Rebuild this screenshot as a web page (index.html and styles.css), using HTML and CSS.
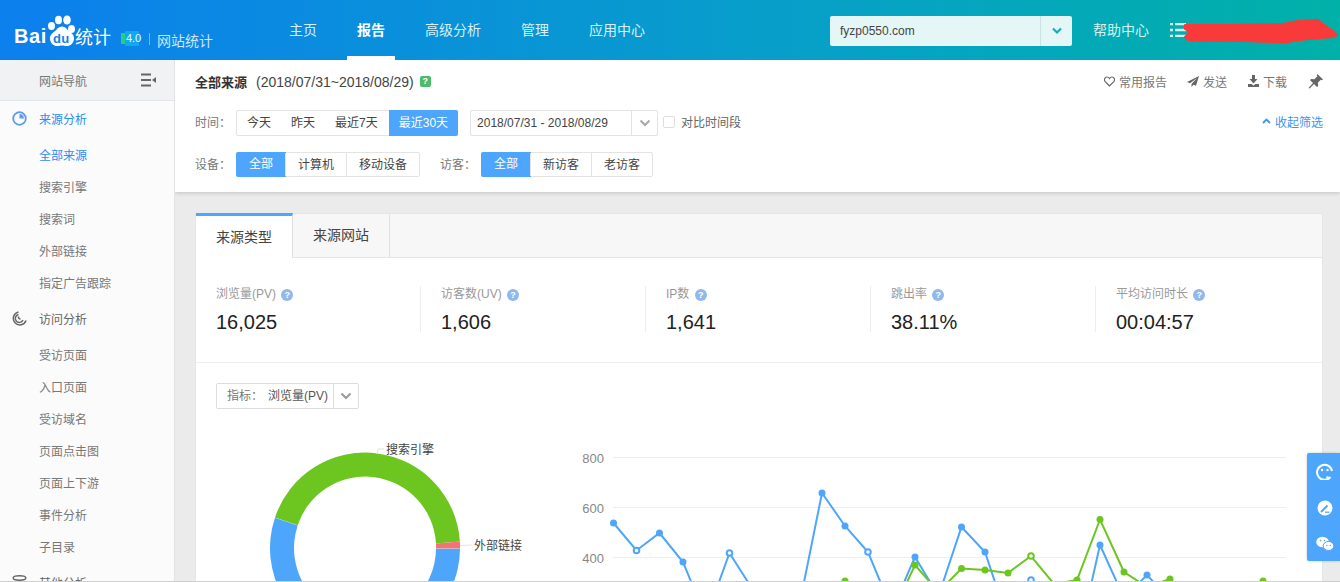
FILE: index.html
```html
<!DOCTYPE html>
<html lang="zh-CN">
<head>
    <meta charset="UTF-8">
    <meta name="viewport" content="width=device-width, initial-scale=1.0">
    <link rel="stylesheet" href="styles.css">
    <title>百度统计 - 全部来源</title>
</head>
<body>
<div class="page">

    <!-- Top header -->
    <header class="top-bar">
        <div class="logo">
            <span class="logo-bai">Bai</span>
            <span class="logo-paw">
                <svg width="29" height="32" viewBox="0 0 29 32">
                    <ellipse cx="4.500" cy="11" rx="3.500" ry="4" fill="#fff"/>
                    <ellipse cx="11.500" cy="5" rx="3.500" ry="4.200" fill="#fff"/>
                    <ellipse cx="20" cy="5" rx="3.800" ry="4.500" fill="#fff"/>
                    <ellipse cx="24.500" cy="14" rx="3.500" ry="4" fill="#fff"/>
                    <path d="M15 11.500c3.500 0 5 3 7.500 5 3 2.200 5 4.500 4.500 8-.6 3.800-3.800 6.500-7 6.500-2 0-3.500-.6-5-.6s-3 .6-5 .6c-3.200 0-6.400-2.700-7-6.500-.5-3.500 1.500-5.800 4.500-8 2.500-2 4-5 7.500-5z" fill="#fff"/>
                </svg>
                <span class="logo-du">du</span>
            </span>
            <span class="logo-cn">统计</span>
            <span class="logo-badge">
                <svg width="22" height="15" viewBox="0 0 22 15">
                    <path d="M0 2h8v11H0z" fill="#25cf80"/>
                    <path d="M4 0h14v5l3 2.500-3 2.500v5H4z" fill="#10a8ee"/>
                </svg>
                <span class="logo-ver">4.0</span>
            </span>
            <span class="logo-line"></span>
            <span class="logo-name">网站统计</span>
        </div>
        <nav class="top-nav">
            <a class="top-link">主页</a>
            <a class="top-link active">报告</a>
            <a class="top-link">高级分析</a>
            <a class="top-link">管理</a>
            <a class="top-link">应用中心</a>
        </nav>
        <div class="site-select">
            <span class="site-name">fyzp0550.com</span>
            <span class="site-arrow">
                <svg width="12" height="8" viewBox="0 0 12 8"><polyline points="2,1.500 6,5.500 10,1.500" fill="none" stroke="#11adc0" stroke-width="2.200"/></svg>
            </span>
        </div>
        <a class="help-link">帮助中心</a>
        <svg class="user-list" width="16" height="14" viewBox="0 0 16 14">
            <path d="M0 1h3M5 1h11M0 7h3M5 7h11M0 13h3M5 13h11" stroke="#d5f2ef" stroke-width="2.400"/>
        </svg>
    </header>

    <!-- Red scribble over the account name -->
    <svg class="scribble" width="156" height="28" viewBox="0 0 156 28">
        <path d="M2 7 50 7 100 6 115 3 135 2 140 6 150 13 154 17 150 19 125 21 110 23 100 25 90 24 60 23 20 23 5 22 2 19 7 14 2 11z" fill="#f83a3a" stroke="#f83a3a" stroke-width="2" stroke-linejoin="round"/>
    </svg>

    <div class="content">

        <!-- Left menu -->
        <aside class="side-menu">
            <div class="side-head">
                <span>网站导航</span>
                <svg width="16" height="14" viewBox="0 0 16 14">
                    <path d="M0 1.500h10M0 7h10M0 12.500h10" stroke="#666" stroke-width="2"/>
                    <path d="M15 4v6l-4-3z" fill="#666"/>
                </svg>
            </div>

            <div class="menu-title blue">
                <svg width="15" height="15" viewBox="0 0 15 15">
                    <circle cx="7.500" cy="7.500" r="6.300" fill="none" stroke="#5b9cf0" stroke-width="1.800"/>
                    <path d="M7.500 3v4.500h4.500a4.500 4.500 0 0 0-4.500-4.500z" fill="#5b9cf0"/>
                </svg>
                来源分析
            </div>
            <ul class="menu-list">
                <li class="blue">全部来源</li>
                <li>搜索引擎</li>
                <li>搜索词</li>
                <li>外部链接</li>
                <li>指定广告跟踪</li>
            </ul>

            <div class="menu-title">
                <svg width="15" height="15" viewBox="0 0 15 15" fill="none" stroke="#666" stroke-width="1.500">
                    <path d="M14 9.500a6.500 6.500 0 1 1-7.500-8.500"/>
                    <path d="M11 9a4 4 0 1 1-4.500-5.500"/>
                    <path d="M8.500 8a2 2 0 0 1-2-2.500"/>
                </svg>
                访问分析
            </div>
            <ul class="menu-list">
                <li>受访页面</li>
                <li>入口页面</li>
                <li>受访域名</li>
                <li>页面点击图</li>
                <li>页面上下游</li>
                <li>事件分析</li>
                <li>子目录</li>
            </ul>

            <div class="menu-title">
                <svg width="15" height="15" viewBox="0 0 15 15" fill="none" stroke="#666" stroke-width="1.500">
                    <ellipse cx="7.500" cy="3" rx="6.300" ry="2.200"/>
                </svg>
                其他分析
            </div>
        </aside>

        <main class="main-area">

            <!-- Filter panel -->
            <section class="filter-panel">
                <div class="title-row">
                    <b class="report-name">全部来源</b>
                    <span class="report-date">(2018/07/31~2018/08/29)</span>
                    <span class="green-tip">?</span>
                    <div class="report-tools">
                        <a class="tool first-tool">
                            <svg width="11" height="11" viewBox="0 0 11 11"><path d="M5.500 10 1.200 5.600C-.4 3.500 1 1 3 1c1.200 0 2 .6 2.500 1.500C6 1.600 6.800 1 8 1c2 0 3.400 2.500 1.800 4.600z" fill="none" stroke="#666" stroke-width="1.200"/></svg>
                            常用报告
                        </a>
                        <a class="tool">
                            <svg width="12" height="11" viewBox="0 0 12 11"><path d="M12 0 0 6l3 1.200L10 2 4.500 8v3l2-2.200 2.500 1z" fill="#666"/></svg>
                            发送
                        </a>
                        <a class="tool">
                            <svg width="11" height="12" viewBox="0 0 11 12"><path d="M4 0h3v4h2.500L5.500 8.500 1.500 4H4zM0 9h3.500l2 1.500 2-1.500H11v3H0z" fill="#666"/></svg>
                            下载
                        </a>
                        <svg class="pin" width="15" height="15" viewBox="0 0 15 15"><path d="M9.500 0 15 5.500l-1.200.8-1-.6-3 3 .4 3.200-1.200 1.200-3-3-4.500 4.500-1-.5 4.500-5-3-3L3.200 5l3.200.3 3-3-.6-1z" fill="#666"/></svg>
                    </div>
                </div>

                <div class="filter-row row-time">
                    <span class="filter-label">时间：</span>
                    <div class="btn-group plain">
                        <a class="seg">今天</a>
                        <a class="seg">昨天</a>
                        <a class="seg">最近7天</a>
                        <a class="seg on">最近30天</a>
                    </div>
                    <div class="date-box">
                        <span class="date-text">2018/07/31 - 2018/08/29</span>
                        <span class="date-arrow">
                            <svg width="12" height="8" viewBox="0 0 12 8"><polyline points="1.500,1.500 6,6 10.500,1.500" fill="none" stroke="#aaa" stroke-width="2"/></svg>
                        </span>
                    </div>
                    <span class="check-box"></span>
                    <span class="check-text">对比时间段</span>
                    <a class="fold-link">
                        <svg width="9" height="6" viewBox="0 0 9 6"><polyline points="1,5 4.500,1.500 8,5" fill="none" stroke="#3c96f0" stroke-width="1.800"/></svg>
                        收起筛选
                    </a>
                </div>

                <div class="filter-row row-device">
                    <span class="filter-label">设备：</span>
                    <div class="btn-group">
                        <a class="seg on">全部</a>
                        <a class="seg">计算机</a>
                        <a class="seg">移动设备</a>
                    </div>
                    <span class="filter-label visitor-label">访客：</span>
                    <div class="btn-group">
                        <a class="seg on">全部</a>
                        <a class="seg">新访客</a>
                        <a class="seg">老访客</a>
                    </div>
                </div>
            </section>

            <!-- Report card -->
            <section class="report-card">
                <div class="tabs">
                    <a class="tab active">来源类型</a>
                    <a class="tab">来源网站</a>
                </div>

                <div class="stats">
                    <div class="stat">
                        <div class="stat-label">浏览量(PV) <span class="help">?</span></div>
                        <div class="stat-value">16,025</div>
                    </div>
                    <div class="stat">
                        <div class="stat-label">访客数(UV) <span class="help">?</span></div>
                        <div class="stat-value">1,606</div>
                    </div>
                    <div class="stat">
                        <div class="stat-label">IP数 <span class="help">?</span></div>
                        <div class="stat-value">1,641</div>
                    </div>
                    <div class="stat">
                        <div class="stat-label">跳出率 <span class="help">?</span></div>
                        <div class="stat-value">38.11%</div>
                    </div>
                    <div class="stat">
                        <div class="stat-label">平均访问时长 <span class="help">?</span></div>
                        <div class="stat-value">00:04:57</div>
                    </div>
                </div>

                <div class="metric-bar">
                    <div class="metric-select">
                        <span class="metric-text"><span class="metric-key">指标：</span>浏览量(PV)</span>
                        <span class="metric-arrow">
                            <svg width="12" height="8" viewBox="0 0 12 8"><polyline points="1.500,1.500 6,6 10.500,1.500" fill="none" stroke="#999" stroke-width="2"/></svg>
                        </span>
                    </div>
                </div>

                <!-- viewBox uses page coordinates so the points read like the picture -->
                <svg class="charts" width="1126" height="165" viewBox="196 421 1126 165">
                    <path d="M275 517.500A95 95 0 0 1 459.900 541.500L436 543.400A71 71 0 0 0 297.700 525.300z" fill="#6cc61f"/>
                    <path d="M459.900 541.500A95 95 0 0 1 460 548.500L436 548.500A71 71 0 0 0 436 543.400z" fill="#f57272"/>
                    <path d="M460 548.800A95 95 0 1 1 275 517.800L297.700 525.600A71 71 0 1 0 436 548.800z" fill="#4da6fb"/>
                    <polyline points="377,454 378,449 384,449" fill="none" stroke="#e3e3e3"/>
                    <polyline points="460,545.500 472,545" fill="none" stroke="#e3e3e3"/>
                    <text class="pie-label" x="386" y="453.500">搜索引擎</text>
                    <text class="pie-label" x="474" y="550">外部链接</text>

                    <path d="M613 457.500H1286M613 507.500H1286M613 557.500H1286" stroke="#eee"/>
                    <text class="axis-label" x="604" y="463">800</text>
                    <text class="axis-label" x="604" y="513">600</text>
                    <text class="axis-label" x="604" y="563">400</text>

                    <polyline class="line-blue" points="613.500,523 636.500,550.500 659.500,533 683,562 706,618 729.500,553 753,590 776,600 799,607 822,493 845,526 868,552 892,610 915,557 938.500,596 961.500,527 985,552 1008,621 1031,580 1054,620 1077,647 1100,545 1124,598 1147,575 1170,600"/>
                    <g fill="#4da6fb">
                        <circle cx="613.500" cy="523" r="3.500"/>
                        <circle cx="659.500" cy="533" r="3.500"/>
                        <circle cx="683" cy="562" r="3.500"/>
                        <circle cx="822" cy="493" r="3.500"/>
                        <circle cx="845" cy="526" r="3.500"/>
                        <circle cx="915" cy="557" r="3.500"/>
                        <circle cx="961.500" cy="527" r="3.500"/>
                        <circle cx="985" cy="552" r="3.500"/>
                        <circle cx="1100" cy="545" r="3.500"/>
                        <circle cx="1147" cy="575" r="3.500"/>
                    </g>
                    <g fill="#fff" stroke="#4da6fb" stroke-width="2">
                        <circle cx="636.500" cy="550.500" r="2.800"/>
                        <circle cx="729.500" cy="553" r="2.800"/>
                        <circle cx="868" cy="552" r="2.800"/>
                        <circle cx="1031" cy="580" r="2.800"/>
                    </g>

                    <polyline class="line-green" points="845,581 868,610 892,614 915,565 938.500,592 961.500,568.500 985,570 1008,573 1031,556 1054,584 1077,580 1100,519.500 1124,572 1147,587 1170,579 1193,600"/>
                    <g fill="#6cc61f">
                        <circle cx="845" cy="581" r="3.500"/>
                        <circle cx="915" cy="565" r="3.500"/>
                        <circle cx="961.500" cy="568.500" r="3.500"/>
                        <circle cx="985" cy="570" r="3.500"/>
                        <circle cx="1008" cy="573" r="3.500"/>
                        <circle cx="1077" cy="580" r="3.500"/>
                        <circle cx="1100" cy="519.500" r="3.500"/>
                        <circle cx="1124" cy="572" r="3.500"/>
                        <circle cx="1170" cy="579" r="3.500"/>
                        <circle cx="1263" cy="581" r="3.500"/>
                    </g>
                    <circle cx="1031" cy="556" r="2.800" fill="#fff" stroke="#6cc61f" stroke-width="2"/>
                </svg>
            </section>
        </main>
    </div>

    <!-- Floating service bar -->
    <div class="float-bar">
        <svg width="18" height="18" viewBox="0 0 18 18">
            <path d="M14.500 15A7.500 7.500 0 1 1 16 9" fill="none" stroke="#fff" stroke-width="2"/>
            <circle cx="6" cy="8" r="1.200" fill="#fff"/>
            <circle cx="11.500" cy="8" r="1.200" fill="#fff"/>
            <circle cx="11.500" cy="15.500" r="1.300" fill="#fff"/>
        </svg>
        <svg width="18" height="18" viewBox="0 0 18 18">
            <circle cx="9" cy="9" r="7.500" fill="#fff"/>
            <path d="M5 13 11.500 6.500" stroke="#4da6fb" stroke-width="2"/>
            <path d="M9 13.200h4.500" stroke="#4da6fb" stroke-width="1.200"/>
        </svg>
        <svg width="18" height="16" viewBox="0 0 18 16">
            <ellipse cx="6.500" cy="6" rx="6.300" ry="5.300" fill="#fff"/>
            <ellipse cx="12.500" cy="10" rx="5.300" ry="4.500" fill="#fff" stroke="#4da6fb"/>
            <circle cx="4.500" cy="4.500" r=".8" fill="#4da6fb"/>
            <circle cx="8.500" cy="4.500" r=".8" fill="#4da6fb"/>
            <circle cx="10.800" cy="9.500" r=".7" fill="#4da6fb"/>
            <circle cx="14.300" cy="9.500" r=".7" fill="#4da6fb"/>
        </svg>
    </div>
</div>
</body>
</html>
```

FILE: styles.css
```css
/* Page frame */
html, body {
    margin: 0;
    padding: 0;
    height: 582px;
    overflow: hidden;
}

body {
    font-family: "Liberation Sans", "Noto Sans CJK SC", sans-serif;
    font-size: 12px;
    color: #333;
    background-color: #ebebeb;
}

.page {
    position: relative;
    height: 581px;
    overflow: hidden;
    border-bottom: 1px solid #cfcfcf;
}

.blue {
    color: #2d8cf0;
}

/* Top header */
.top-bar {
    display: flex;
    align-items: center;
    height: 60px;
    background: linear-gradient(90deg, #0c7fee 0%, #07a0c8 60%, #00b1a8 100%);
}

.logo {
    display: flex;
    align-items: center;
    width: 279px;
    height: 60px;
    padding-left: 14px;
    box-sizing: border-box;
    color: #fff;
}

.logo-bai {
    margin-top: 12px;
    font-size: 20px;
    font-weight: bold;
    letter-spacing: .6px;
}

.logo-paw {
    position: relative;
    width: 29px;
    height: 32px;
    margin: 2px 0 0 0;
}

.logo-paw svg {
    display: block;
}

.logo-du {
    position: absolute;
    left: 6px;
    top: 17px;
    font-size: 13px;
    font-weight: bold;
    line-height: 13px;
    letter-spacing: .4px;
    color: #0f84e6;
}

.logo-cn {
    margin: 12px 0 0 -1px;
    font-size: 18px;
}

.logo-badge {
    position: relative;
    width: 22px;
    height: 15px;
    margin: 17px 0 0 10px;
}

.logo-badge svg {
    display: block;
}

.logo-ver {
    position: absolute;
    left: 5px;
    top: 0;
    font-size: 11px;
    line-height: 15px;
    color: #e9fbff;
}

.logo-line {
    width: 1px;
    height: 12px;
    margin: 17px 7px 0 6px;
    background-color: #7db9ee;
}

.logo-name {
    margin-top: 20px;
    font-size: 14px;
    white-space: nowrap;
    color: #cde6f8;
}

.top-nav {
    display: flex;
    gap: 20px;
    height: 60px;
}

.top-link {
    padding: 0 10px;
    font-size: 14px;
    line-height: 60px;
    color: #d6f0f6;
}

.top-link.active {
    font-weight: bold;
    color: #fff;
    box-shadow: inset 0 -4px 0 #fff;
}

.site-select {
    display: flex;
    width: 242px;
    height: 30px;
    margin: 2px 0 0 175px;
    background-color: #e4f6f6;
    border-radius: 2px;
}

.site-name {
    flex: 1;
    padding-left: 10px;
    line-height: 30px;
    color: #444;
}

.site-arrow {
    display: flex;
    align-items: center;
    justify-content: center;
    width: 31px;
    border-left: 1px solid #c9e3e3;
}

.help-link {
    margin: -2px 0 0 21px;
    font-size: 14px;
    color: #d5f2ef;
}

.user-list {
    margin-left: 21px;
}

.scribble {
    position: absolute;
    left: 1183px;
    top: 18px;
}

/* Below the header */
.content {
    display: flex;
    height: 522px;
}

/* Left menu */
.side-menu {
    flex: none;
    width: 174px;
    overflow: hidden;
    background-color: #fbfbfc;
    border-right: 1px solid #e3e3e3;
    color: #777;
}

.side-head {
    display: flex;
    align-items: center;
    justify-content: space-between;
    height: 40px;
    padding: 0 17px 0 39px;
    background-color: #f0f2f4;
    border-bottom: 1px solid #e3e5e8;
}

.menu-title {
    display: flex;
    align-items: center;
    gap: 12px;
    height: 35px;
    padding-left: 12px;
    color: #666;
}

.menu-title.blue {
    color: #2d8cf0;
}

.menu-list {
    list-style: none;
    margin: 0 0 2px 0;
    padding: 3px 0 0 39px;
}

.menu-list li {
    height: 32px;
    line-height: 34px;
}

.menu-list li.blue {
    color: #2d8cf0;
}

/* Main column */
.main-area {
    flex: 1;
    min-width: 0;
    overflow: hidden;
}

/* Filter panel */
.filter-panel {
    position: relative;
    height: 132px;
    padding: 0 17px 0 20px;
    background-color: #fff;
    box-shadow: 0 1px 4px rgba(0, 0, 0, .18);
}

.title-row {
    display: flex;
    align-items: center;
    height: 43px;
}

.report-name {
    font-size: 13px;
    color: #333;
}

.report-date {
    margin-left: 9px;
    font-size: 14px;
    color: #444;
}

.green-tip {
    width: 11px;
    height: 11px;
    margin-left: 6px;
    font-size: 9px;
    font-weight: bold;
    line-height: 11px;
    text-align: center;
    color: #fff;
    background-color: #4cbb6a;
    border-radius: 2px;
}

.report-tools {
    display: flex;
    align-items: center;
    margin: -1px 0 0 auto;
    color: #777;
}

.tool {
    display: flex;
    align-items: center;
    gap: 4px;
    margin-right: 21px;
}

.first-tool {
    margin-right: 20px;
}

.pin {
    display: block;
}

.filter-row {
    display: flex;
    align-items: center;
}

.row-time {
    height: 26px;
    margin-top: 7px;
}

.row-device {
    height: 25px;
    margin-top: 16px;
}

.filter-label {
    width: 41px;
    margin-top: -3px;
    color: #777;
}

.visitor-label {
    margin-left: 20px;
}

.btn-group {
    display: flex;
    height: 25px;
    border: 1px solid #e3e3e3;
    border-radius: 2px;
    box-sizing: border-box;
}

.row-time .btn-group {
    height: 26px;
}

.seg {
    padding: 0 12px;
    line-height: 24px;
    color: #444;
    border-left: 1px solid #e3e3e3;
}

.seg:first-child {
    border-left: none;
}

.seg.on {
    margin: -1px;
    padding: 0 13px;
    line-height: 25px;
    color: #fff;
    background-color: #4da6fb;
    border-left: none;
    border-radius: 2px 0 0 2px;
}

.btn-group.plain .seg {
    padding: 0 10px;
    border-left: none;
}

.btn-group.plain .seg.on {
    margin: -1px -1px -1px 1px;
    padding: 0 10px;
    line-height: 26px;
    border-radius: 0 2px 2px 0;
}

.date-box {
    display: flex;
    width: 188px;
    height: 26px;
    margin-left: 12px;
    box-sizing: border-box;
    border: 1px solid #e3e3e3;
    border-radius: 2px;
}

.date-text {
    flex: 1;
    padding-left: 6px;
    line-height: 24px;
    color: #444;
}

.date-arrow {
    display: flex;
    align-items: center;
    justify-content: center;
    width: 25px;
    border-left: 1px solid #e3e3e3;
}

.check-box {
    width: 10px;
    height: 10px;
    margin: -2px 0 0 5px;
    border: 1px solid #ddd;
    border-radius: 2px;
}

.check-text {
    margin: -3px 0 0 6px;
    color: #666;
}

.fold-link {
    display: flex;
    align-items: center;
    gap: 4px;
    margin: -4px 0 0 auto;
    color: #3c96f0;
}

/* Report card */
.report-card {
    width: 1126px;
    margin: 21px 0 0 20px;
    background-color: #fff;
    border: 1px solid #e6e6e6;
    border-top: none;
}

.tabs {
    display: flex;
    height: 45px;
    box-sizing: border-box;
    background-color: #f7f7f7;
    border-top: 1px solid #e6e6e6;
    border-bottom: 1px solid #e6e6e6;
}

.tab {
    width: 96px;
    font-size: 14px;
    line-height: 43px;
    text-align: center;
    color: #444;
    border-right: 1px solid #e0e0e0;
}

.tab.active {
    height: 42px;
    margin-top: -1px;
    line-height: 43px;
    background-color: #fff;
    border-top: 3px solid #4da6fb;
}

.stats {
    display: flex;
    height: 105px;
    box-sizing: border-box;
    padding-top: 28px;
    border-bottom: 1px solid #eee;
}

.stat {
    width: 225px;
    height: 46px;
    box-sizing: border-box;
    padding-left: 20px;
    border-right: 1px solid #eee;
}

.stat:last-child {
    border-right: none;
}

.stat-label {
    height: 16px;
    line-height: 16px;
    color: #999;
}

.help {
    display: inline-block;
    width: 12px;
    height: 12px;
    margin-left: 2px;
    font-size: 9px;
    font-weight: bold;
    line-height: 12px;
    text-align: center;
    color: #fff;
    background-color: #8fb9ee;
    border-radius: 50%;
}

.stat-value {
    margin-top: 8px;
    font-size: 20px;
    line-height: 24px;
    color: #222;
}

.metric-bar {
    padding: 20px 0 0 20px;
}

.metric-select {
    display: flex;
    width: 143px;
    height: 26px;
    box-sizing: border-box;
    border: 1px solid #ddd;
    border-radius: 2px;
}

.metric-text {
    flex: 1;
    padding-left: 10px;
    line-height: 24px;
    white-space: nowrap;
    color: #555;
}

.metric-key {
    margin-right: 5px;
    color: #777;
}

.metric-arrow {
    display: flex;
    align-items: center;
    justify-content: center;
    width: 24px;
    border-left: 1px solid #ddd;
}

/* Charts */
.charts {
    display: block;
    margin-top: 12px;
}

.pie-label {
    font-size: 12px;
    fill: #444;
}

.axis-label {
    font-size: 13px;
    fill: #888;
    text-anchor: end;
}

.line-blue, .line-green {
    fill: none;
    stroke-width: 2;
}

.line-blue {
    stroke: #4da6fb;
}

.line-green {
    stroke: #6cc61f;
}

/* Floating service bar */
.float-bar {
    position: absolute;
    left: 1307px;
    top: 453px;
    display: flex;
    flex-direction: column;
    align-items: center;
    justify-content: space-around;
    width: 33px;
    height: 108px;
    padding: 0 0 0 3px;
    box-sizing: border-box;
    background-color: #4da6fb;
    border-radius: 2px 0 0 2px;
    box-shadow: 0 0 3px rgba(0, 0, 0, .2);
}
```
